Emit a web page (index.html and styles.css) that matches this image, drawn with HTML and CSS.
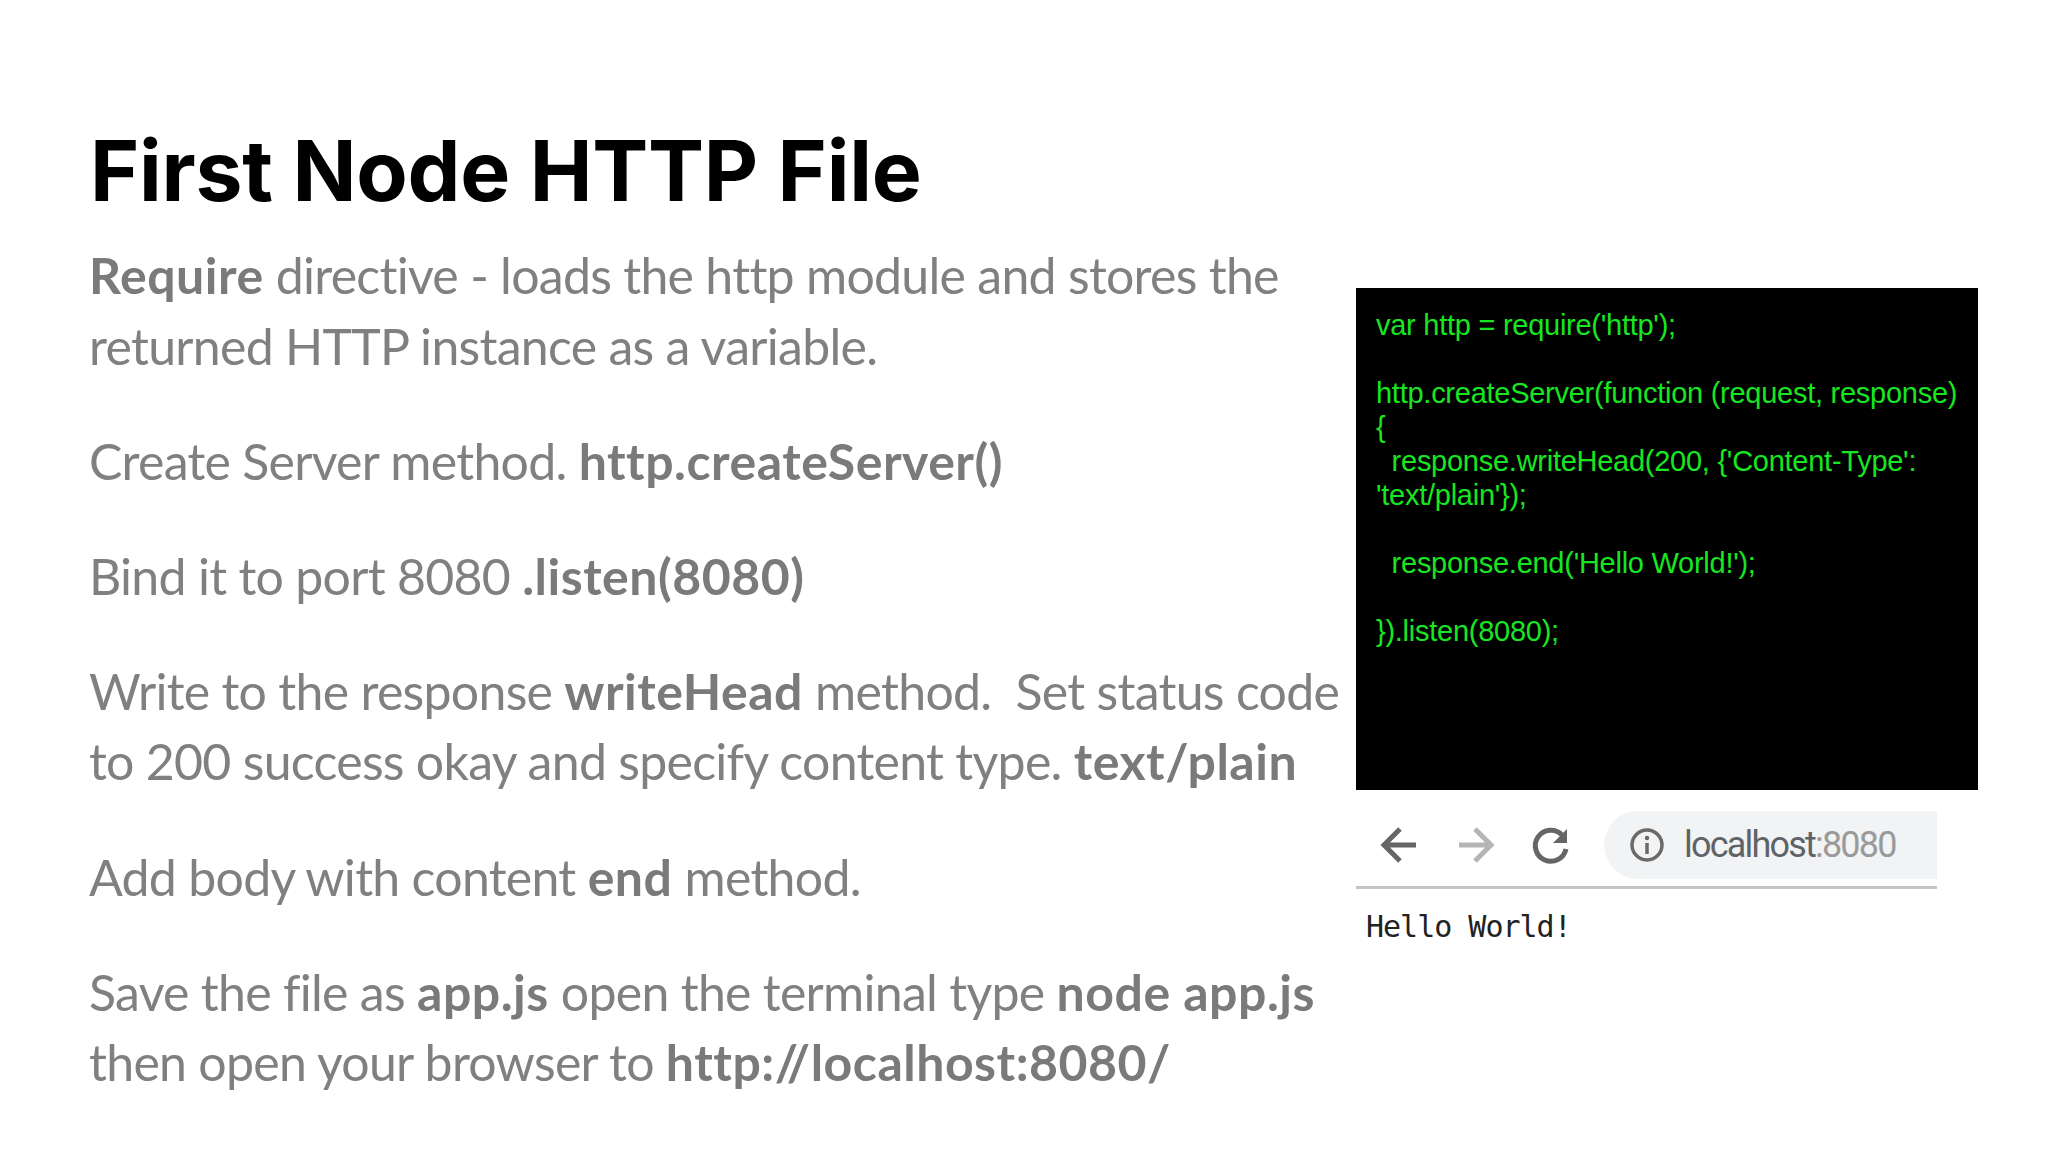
FILE: index.html
```html
<!DOCTYPE html>
<html lang="en">
<head>
<meta charset="utf-8">
<title>First Node HTTP File</title>
<link rel="stylesheet" href="styles.css">
</head>
<body>
<main class="slide">
  <h1 class="title">First Node HTTP File</h1>
  <div class="content">
    <section class="notes">
      <p><b>Require</b> directive - loads the http module and stores the returned HTTP instance as a variable.</p>
      <p>Create Server method. <b>http.createServer()</b></p>
      <p>Bind it to port 8080 <b>.listen(8080)</b></p>
      <p>Write to the response <b>writeHead</b> method.&nbsp; Set status code to 200 success okay and specify content type. <b>text/plain</b></p>
      <p>Add body with content <b>end</b> method.</p>
      <p>Save the file as <b>app.js</b> open the terminal type <b>node app.js</b> then open your browser to <b>http://localhost:8080/</b></p>
    </section>
    <aside class="media">
      <pre class="code">var http = require('http');

http.createServer(function (request, response)
{
  response.writeHead(200, {'Content-Type':
'text/plain'});

  response.end('Hello World!');

}).listen(8080);</pre>
      <div class="browser">
        <div class="toolbar">
          <svg class="nav" viewBox="0 0 46 46" width="46" height="46"><path class="dark" d="M40 23H9M24 7 8 23l16 16"/></svg>
          <svg class="nav" viewBox="0 0 46 46" width="46" height="46"><path class="light" d="M7 23h31M23 7l16 16-16 16"/></svg>
          <svg class="nav" viewBox="0 0 46 46" width="46" height="46"><path class="dark" d="M34 13A15.500 15.500 0 1 0 38 27"/><path class="fill" d="M39 7v14H25z"/></svg>
          <div class="omnibox">
            <svg viewBox="0 0 34 34" width="34" height="34"><circle class="ring" cx="17" cy="17" r="15"/><path class="ring" d="M17 15v11"/><circle class="fill" cx="17" cy="10" r="2.200"/></svg>
            <span class="host">localhost<span class="port">:8080</span></span>
          </div>
        </div>
        <div class="page">Hello World!</div>
      </div>
    </aside>
  </div>
</main>
</body>
</html>
```
FILE: styles.css
```css
* { box-sizing: border-box; }
html, body { margin: 0; background: #fff; }
.slide {
  width: 2048px;
  height: 1152px;
  padding: 122px 0 0 90px;
  overflow: hidden;
}
.title {
  margin: 0;
  font: 700 84px/98px "Inter", "Lato", sans-serif;
  letter-spacing: -0.25px;
  color: #000;
}
.content {
  display: flex;
  align-items: flex-start;
  margin-top: 20px;
}
.notes {
  width: 1267px;
  flex: none;
  margin-left: -1px;
  font: 400 50px/70.6px "Lato", "Noto Sans", sans-serif;
  letter-spacing: -0.72px;
  color: #808080;
}
.notes p { margin: 0 0 44.5px; }
.notes b { font-weight: 700; color: #7a7a7a; letter-spacing: 0.5px; }
.media { margin-top: 48px; }
.code {
  width: 622px;
  height: 502px;
  margin: 0;
  padding: 20px 16px 0 20px;
  background: #000;
  color: #18e620;
  font: 400 29px/34px "Liberation Sans", Arial, sans-serif;
  letter-spacing: -0.26px;
  white-space: pre-wrap;
}
.browser { width: 581px; margin-top: 21px; }
.toolbar {
  display: flex;
  align-items: flex-start;
  gap: 30px;
  height: 78px;
  padding-left: 20px;
  border-bottom: 3px solid #c4c4c4;
}
.nav { flex: none; margin-top: 11px; }
.dark, .light { fill: none; stroke-width: 5; }
.ring { fill: none; stroke-width: 3.5; stroke: #6a6a6a; }
.dark { stroke: #666; }
.light { stroke: #b5b5b5; }
.fill { fill: #666; }
.omnibox {
  flex: 1;
  display: flex;
  align-items: center;
  gap: 20px;
  height: 68px;
  padding-left: 26px;
  background: #f1f3f4;
  border-radius: 34px 0 0 34px;
}
.host {
  font: 400 36px/1 "Roboto", "Liberation Sans", sans-serif;
  letter-spacing: -1.8px;
  color: #5f6368;
}
.port { color: #9a9a9a; }
.page {
  padding: 21px 0 0 10px;
  font: 400 30px/34px "DejaVu Sans Mono", monospace;
  letter-spacing: -1px;
  color: #222;
}
```
